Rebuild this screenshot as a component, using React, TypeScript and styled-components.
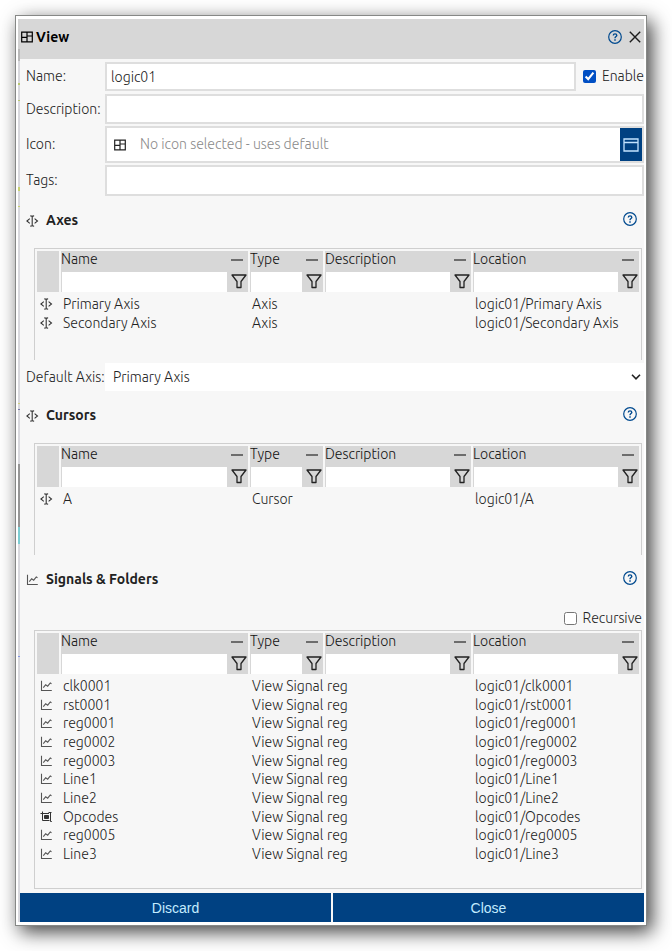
import React from "react";
import styled, { createGlobalStyle } from "styled-components";

const GlobalStyle = createGlobalStyle`
  * { box-sizing: border-box; }
  body {
    margin: 0;
    background: #ffffff;
    color: #222222;
    font-family: Ubuntu, "Noto Sans", sans-serif;
    font-size: 14px;
    font-weight: 300;
    line-height: 19px;
  }
  input, select { font: inherit; color: inherit; }
`;

const Dialog = styled.main`
  display: grid;
  grid-template-columns: 2px minmax(0, 1fr);
  margin: 15px 25px 25px 15px;
  padding: 3px 2px;
  border: 1px solid #868886;
  background: #ffffff;
  box-shadow: 5px 6px 18px rgba(0, 0, 0, 0.75);
`;

const BackdropEdge = styled.div`
  background: linear-gradient(
    #d2d2d2 30px, #b9b9b9 30px 42px, #d9d9de 42px 64px,
    #b9c86e 64px 66px, #d9d9de 66px 81px, #b9c86e 81px 82px,
    #d9d9de 82px 168px, #c8d26e 168px 172px, #d9d9de 172px 187px,
    #c8d26e 187px 188px, #d9d9de 188px 384px, #d2d27d 384px 385px,
    #d9d9de 385px 390px, #7878aa 390px 391px, #d9d9de 391px 445px,
    #969696 445px 508px, #7dcdd2 508px 525px, #d9d9de 525px 637px,
    #8296e6 637px 638px, #d9d9de 638px
  );
`;

const Panel = styled.div`
  background: #f7f7f7;
`;

const TitleBar = styled.header`
  display: flex;
  align-items: center;
  height: 40px;
  padding: 0 3px 4px 1px;
  background: #d7d7d7;
  color: #000000;
`;

const Title = styled.h1`
  flex: 1;
  margin: 0 0 0 3px;
  font-size: 14px;
  font-weight: 600;
`;

const IconButton = styled.button<{ $tone?: "help" }>`
  display: grid;
  place-items: center;
  padding: 0;
  border: 0;
  background: none;
  color: ${(p) => (p.$tone === "help" ? "#004a8f" : "#1c1c1c")};
`;

const TitleActions = styled.div`
  display: flex;
  align-items: center;
  gap: 7px;
`;

const Form = styled.div`
  display: grid;
  grid-template-rows: 30px 30px 37px 31px;
  gap: 2px;
  padding-top: 3px;
`;

const FormRow = styled.div`
  display: grid;
  grid-template-columns: 79px minmax(0, 1fr) auto;
  align-items: center;
  padding-left: 6px;
  white-space: nowrap;
`;

const NameRow = styled(FormRow)`
  height: 29px;
`;

const TextInput = styled.input<{ $wide?: boolean }>`
  grid-column: ${(p) => (p.$wide ? "2 / -1" : "2")};
  width: 100%;
  height: 100%;
  padding: 0 4px;
  border: 2px solid #dedede;
  border-radius: 0;
  background: #ffffff;
`;

const CheckLabel = styled.label`
  display: flex;
  align-items: center;
  gap: 6px;
`;

const Checkbox = styled.input`
  width: 13px;
  height: 13px;
  margin: 0;
  accent-color: #004fc4;
`;

const EnableLabel = styled(CheckLabel)`
  margin-left: 7px;
`;

const IconField = styled.div`
  grid-column: 2 / -1;
  display: flex;
  align-items: center;
  height: 100%;
  padding-left: 7px;
  border: 2px solid #dedede;
  background: #ffffff;
`;

const IconInput = styled.input`
  flex: 1;
  min-width: 0;
  margin-left: 14px;
  padding: 0;
  border: 0;
  background: none;
  &::placeholder { color: #8a8a8a; opacity: 1; }
`;

const PickButton = styled.button`
  display: grid;
  place-items: center;
  align-self: stretch;
  width: 22px;
  padding: 0;
  border: 0;
  background: #004182;
  color: #c3e3ff;
`;

const SectionHeading = styled.div`
  display: flex;
  align-items: center;
  height: 52px;
  padding: 0 7px 3px 6px;
`;

const SectionTitle = styled.h2`
  flex: 1;
  margin: 0 0 0 7px;
  color: #222222;
  font-size: 14px;
  font-weight: 600;
`;

const SectionHelp = styled(IconButton)`
  margin-bottom: 3px;
`;

const Frame = styled.div<{ $closed?: boolean }>`
  height: ${(p) => (p.$closed ? 259 : 112)}px;
  margin: 0 2px 0 14px;
  padding: 2px;
  border: 1px solid #cfcfcf;
  border-bottom-width: ${(p) => (p.$closed ? 1 : 0)}px;
`;

const Grid = styled.table`
  width: 100%;
  table-layout: fixed;
  border-collapse: collapse;
`;

const HeadCell = styled.th`
  height: 43px;
  padding: 0 2px 2px 0;
  color: #111111;
  font-weight: 300;
  text-align: left;
  &:last-child { padding-right: 0; }
`;

const HeadBox = styled.div`
  height: 41px;
  background: #d7d7d7;
`;

const HeadTop = styled.div`
  display: flex;
  align-items: center;
  justify-content: space-between;
  height: 21px;
  padding: 0 5px 4px 0;
`;

const CollapseButton = styled(IconButton)`
  padding-top: 1px;
`;

const FilterRow = styled.div`
  display: flex;
  height: 20px;
  padding-left: 1px;
`;

const FilterInput = styled.input`
  flex: 1;
  min-width: 0;
  padding: 0 2px;
  border: 0;
  background: #ffffff;
`;

const FilterButton = styled(IconButton)`
  width: 21px;
  padding: 0 1px 2px 4px;
`;

const Row = styled.tr`
  height: 19px;
  &:nth-child(3n) { height: 18px; }
`;

const Cell = styled.td`
  padding: 0 0 0 2px;
  line-height: 18px;
  white-space: nowrap;
  &:first-child { padding-left: 3px; }
  svg { display: block; }
`;

const SelectRow = styled.div`
  display: grid;
  grid-template-columns: 79px minmax(0, 1fr);
  align-items: center;
  height: 28px;
  margin-top: 3px;
  padding-left: 6px;
  white-space: nowrap;
`;

const SelectBox = styled.div`
  display: grid;
  grid-template-columns: minmax(0, 1fr) 16px;
  align-items: center;
  height: 28px;
  background: #ffffff;
  svg { grid-area: 1 / 2; justify-self: center; pointer-events: none; }
`;

const Select = styled.select`
  grid-area: 1 / 1 / 2 / 3;
  height: 28px;
  padding: 0 8px;
  border: 0;
  background: none;
  appearance: none;
`;

const RecursiveRow = styled.div`
  display: flex;
  justify-content: flex-end;
  height: 23px;
  padding: 0 2px 0 0;
`;

const Actions = styled.footer`
  display: grid;
  grid-template-columns: 1fr 1fr;
  gap: 2px;
  margin-top: 4px;
`;

const ActionButton = styled.button`
  height: 29px;
  padding: 0;
  border: 0;
  background: #004182;
  color: #c3ecff;
  font-family: "Liberation Sans", sans-serif;
  font-size: 14px;
`;

const ViewIcon = () => (
  <svg width="12" height="12" viewBox="0 0 12 12" fill="none" stroke="currentColor" strokeWidth="1.2">
    <path d="M.7 1.2h10.6v9.6H.7zM6 1.2v9.6M.7 6.4H6M6 5h5.3" />
  </svg>
);

const HelpIcon = () => (
  <svg width="14" height="14" viewBox="0 0 14 14" fill="none" stroke="currentColor">
    <circle cx="7" cy="7" r="6.3" strokeWidth="1.2" />
    <path d="M5.3 5.4c0-2.1 3.5-2.1 3.5 0C8.8 6.5 7 6.7 7 8.2" strokeWidth="1.4" />
    <path d="M7 9.3v1.4" strokeWidth="1.5" />
  </svg>
);

const CloseIcon = () => (
  <svg width="12" height="12" viewBox="0 0 12 12" stroke="currentColor" strokeWidth="1.4">
    <path d="M.8.8l10.4 10.4M11.2.8L.8 11.2" />
  </svg>
);

const CursorIcon = () => (
  <svg width="13" height="12" viewBox="0 0 13 12" fill="none" stroke="#333333" strokeWidth="1.1">
    <path d="M3.8 3.6L.9 6l2.9 2.4M8.6 3.6L11.5 6 8.6 8.4M6.2 1.4v9.2M4.3.9c1 0 1.5.1 1.9.5.4-.4.9-.5 1.9-.5M4.3 11.1c1 0 1.5-.1 1.9-.5.4.4.9.5 1.9.5" />
  </svg>
);

const ChartIcon = () => (
  <svg width="13" height="12" viewBox="0 0 13 12" fill="none" stroke="#555555" strokeWidth="1.1">
    <path d="M1.5.8v9.7h10.3M3.3 7.7l2.4-3 2 1.5 2.6-3.2 1.2.7" />
  </svg>
);

const OpcodeIcon = () => (
  <svg width="13" height="12" viewBox="0 0 13 12" fill="none" stroke="#333333" strokeWidth="1">
    <path d="M.5 2.5H9M2.5.5v9h7M8.5 1.5h3M10.5 1.5v9h1.3" />
    <path d="M4.5 4.5h4v3h-4z" fill="#333333" />
  </svg>
);

const WindowIcon = () => (
  <svg width="16" height="14" viewBox="0 0 16 14" fill="none" stroke="currentColor" strokeWidth="1.3">
    <path d="M1 1h14v12H1zM1 4.5h14" />
  </svg>
);

const MinusIcon = () => (
  <svg width="12" height="4" viewBox="0 0 12 4" stroke="#333333" strokeWidth="1.3">
    <path d="M0 2h12" />
  </svg>
);

const FunnelIcon = () => (
  <svg width="16" height="15" viewBox="0 0 16 15" fill="none" stroke="#222222" strokeWidth="1.3" strokeLinejoin="round">
    <path d="M1 1h14L10 7.5V13.5H6V7.5z" />
  </svg>
);

const ChevronIcon = () => (
  <svg width="10" height="6" viewBox="0 0 10 6" fill="none" stroke="#222222" strokeWidth="1.6">
    <path d="M1 .8L5 4.8 9 .8" />
  </svg>
);

type Item = { icon: "cursor" | "chart" | "opcode"; name: string; type: string; description?: string };

const icons = { cursor: CursorIcon, chart: ChartIcon, opcode: OpcodeIcon };

const axes: Item[] = [
  { icon: "cursor", name: "Primary Axis", type: "Axis" },
  { icon: "cursor", name: "Secondary Axis", type: "Axis" },
];

const cursors: Item[] = [{ icon: "cursor", name: "A", type: "Cursor" }];

const signals: Item[] = [
  "clk0001", "rst0001", "reg0001", "reg0002", "reg0003",
  "Line1", "Line2", "Opcodes", "reg0005", "Line3",
].map((name) => ({
  icon: name === "Opcodes" ? "opcode" : "chart",
  name,
  type: "View Signal",
  description: "reg",
}));

function Section({ icon, title }: { icon: React.ReactNode; title: string }) {
  return (
    <SectionHeading>
      {icon}
      <SectionTitle>{title}</SectionTitle>
      <SectionHelp type="button" $tone="help" aria-label={`Help on ${title}`}>
        <HelpIcon />
      </SectionHelp>
    </SectionHeading>
  );
}

function ItemTable({ items, label, closed }: { items: Item[]; label: string; closed?: boolean }) {
  return (
    <Frame $closed={closed}>
      <Grid aria-label={label}>
        <colgroup>
          <col width="24" />
          <col width="189" />
          <col width="75" />
          <col width="148" />
          <col />
        </colgroup>
        <thead>
          <tr>
            <HeadCell><HeadBox /></HeadCell>
            {["Name", "Type", "Description", "Location"].map((column) => (
              <HeadCell key={column} scope="col">
                <HeadBox>
                  <HeadTop>
                    {column}
                    <CollapseButton type="button" aria-label={`Collapse ${column}`}>
                      <MinusIcon />
                    </CollapseButton>
                  </HeadTop>
                  <FilterRow>
                    <FilterInput aria-label={`Filter by ${column}`} />
                    <FilterButton type="button" aria-label={`Filter options for ${column}`}>
                      <FunnelIcon />
                    </FilterButton>
                  </FilterRow>
                </HeadBox>
              </HeadCell>
            ))}
          </tr>
        </thead>
        <tbody>
          {items.map((item) => {
            const Icon = icons[item.icon];
            return (
              <Row key={item.name}>
                <Cell><Icon /></Cell>
                <Cell>{item.name}</Cell>
                <Cell>{item.type}</Cell>
                <Cell>{item.description}</Cell>
                <Cell>logic01/{item.name}</Cell>
              </Row>
            );
          })}
        </tbody>
      </Grid>
    </Frame>
  );
}

export default function App() {
  return (
    <>
      <GlobalStyle />
      <Dialog>
        <BackdropEdge />
        <Panel>
          <TitleBar>
            <ViewIcon />
            <Title>View</Title>
            <TitleActions>
              <IconButton type="button" $tone="help" aria-label="Help"><HelpIcon /></IconButton>
              <IconButton type="button" aria-label="Close dialog"><CloseIcon /></IconButton>
            </TitleActions>
          </TitleBar>
          <Form>
            <NameRow>
              <label htmlFor="name">Name:</label>
              <TextInput id="name" name="name" defaultValue="logic01" />
              <EnableLabel>
                <Checkbox type="checkbox" defaultChecked />
                Enable
              </EnableLabel>
            </NameRow>
            <FormRow>
              <label htmlFor="description">Description:</label>
              <TextInput id="description" name="description" $wide />
            </FormRow>
            <FormRow>
              <label htmlFor="icon">Icon:</label>
              <IconField>
                <ViewIcon />
                <IconInput id="icon" placeholder="No icon selected - uses default" />
                <PickButton type="button" aria-label="Select icon"><WindowIcon /></PickButton>
              </IconField>
            </FormRow>
            <FormRow>
              <label htmlFor="tags">Tags:</label>
              <TextInput id="tags" name="tags" $wide />
            </FormRow>
          </Form>
          <Section icon={<CursorIcon />} title="Axes" />
          <ItemTable items={axes} label="Axes" />
          <SelectRow>
            <label htmlFor="default-axis">Default Axis:</label>
            <SelectBox>
              <Select id="default-axis" defaultValue="Primary Axis">
                <option>Primary Axis</option>
                <option>Secondary Axis</option>
              </Select>
              <ChevronIcon />
            </SelectBox>
          </SelectRow>
          <Section icon={<CursorIcon />} title="Cursors" />
          <ItemTable items={cursors} label="Cursors" />
          <Section icon={<ChartIcon />} title="Signals & Folders" />
          <RecursiveRow>
            <CheckLabel>
              <Checkbox type="checkbox" />
              Recursive
            </CheckLabel>
          </RecursiveRow>
          <ItemTable items={signals} label="Signals & Folders" closed />
          <Actions>
            <ActionButton type="button">Discard</ActionButton>
            <ActionButton type="button">Close</ActionButton>
          </Actions>
        </Panel>
      </Dialog>
    </>
  );
}
